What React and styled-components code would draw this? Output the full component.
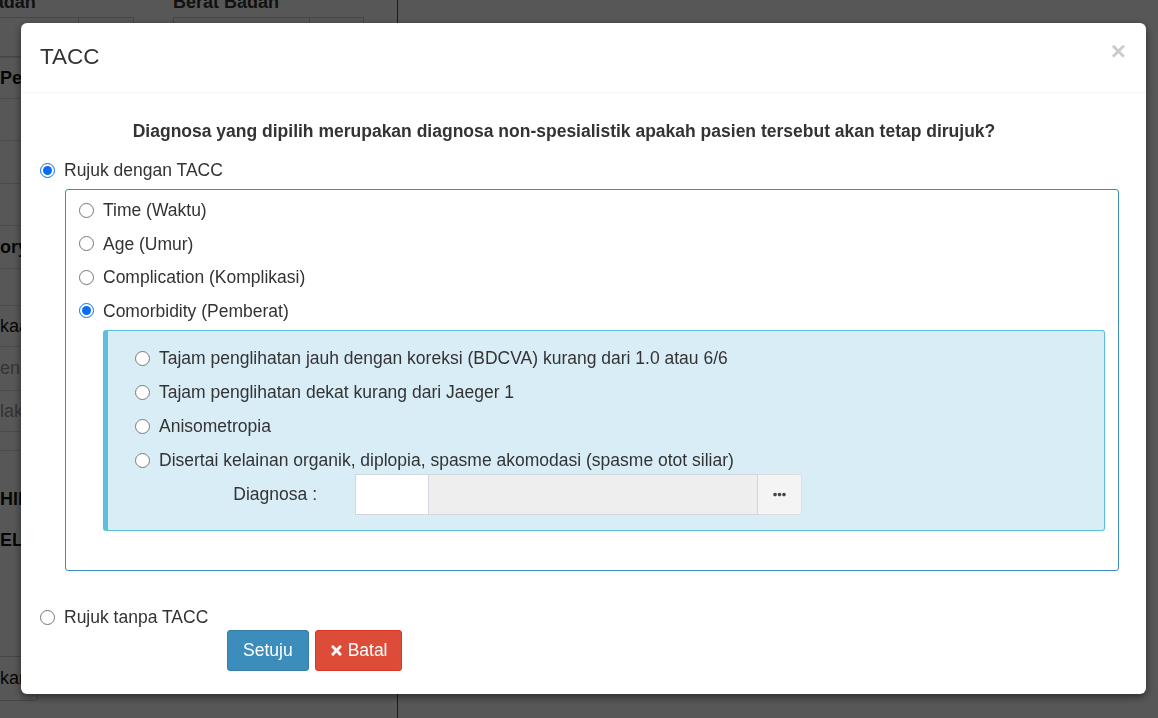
import React, { useState } from 'react'
import styled, { createGlobalStyle } from 'styled-components'
import { FaTimes, FaEllipsisH } from 'react-icons/fa'

const GlobalStyle = createGlobalStyle`
  html, body {
    margin: 0;
    padding: 0;
    height: 100%;
    overflow: hidden;
  }
  body {
    font-family: 'Liberation Sans', Arial, sans-serif;
    color: #333;
    background: #fff;
  }
`

/* ---------- page behind the dialog ---------- */

const Page = styled.div`
  display: flex;
  height: 718px;
  background: #fff;
`

const LeftCol = styled.div`
  width: 397px;
  flex: none;
  border-right: 1px solid #b52a1e;
  display: flex;
  flex-direction: column;
`

const HeadLabels = styled.div`
  display: grid;
  grid-template-columns: 173px 1fr;
  margin-top: -9px;
  height: 26px;
  font-weight: bold;
  font-size: 18px;
  line-height: 22px;

  span:first-child {
    margin-left: -78px;
  }
`

const InputPair = styled.div`
  display: grid;
  grid-template-columns: 134px 39px 191px;
  height: 41px;
  border-bottom: 1px solid #ddd;
  box-sizing: border-box;
`

const FakeInput = styled.div`
  display: grid;
  grid-template-columns: ${p => p.$cols};
  border: 1px solid #ccc;
  border-left: ${p => (p.$cut ? 'none' : '1px solid #ccc')};

  div + div {
    border-left: 1px solid #ccc;
  }
`

const BgRow = styled.div`
  height: ${p => p.$h}px;
  box-sizing: border-box;
  border-bottom: ${p => (p.$line ? '1px solid #ddd' : 'none')};
  display: flex;
  align-items: center;
  font-size: 18px;
  font-weight: ${p => (p.$bold ? 'bold' : 'normal')};
  color: ${p => (p.$muted ? '#999' : '#111')};
  white-space: nowrap;
  padding-left: ${p => p.$indent || 0}px;
`

const BgButton = styled.div`
  width: 38px;
  height: 45px;
  box-sizing: border-box;
  border: 1px solid #ccc;
  border-left: none;
  border-radius: 0 4px 4px 0;
  display: flex;
  align-items: center;
  overflow: hidden;
  font-size: 18px;
  color: #111;
`

/* ---------- modal ---------- */

const Backdrop = styled.div`
  position: fixed;
  inset: 0;
  background: rgba(0, 0, 0, 0.66);
`

const Dialog = styled.div`
  position: fixed;
  top: 23px;
  left: 21px;
  width: 1125px;
  background: #fff;
  border-radius: 6px;
  box-shadow: 0 3px 9px rgba(0, 0, 0, 0.5);
  font-size: 17.5px;
`

const Header = styled.div`
  height: 70px;
  box-sizing: border-box;
  border-bottom: 1px solid #f4f4f4;
  padding: 0 20px 2px 19px;
  display: flex;
  align-items: center;
  justify-content: space-between;
`

const Title = styled.h4`
  margin: 0;
  font-size: 22.5px;
  font-weight: normal;
  line-height: 28px;
  color: #333;
`

const Close = styled.button`
  align-self: flex-start;
  margin-top: 15px;
  padding: 0;
  border: 0;
  background: none;
  font-family: 'Liberation Sans', Arial, sans-serif;
  font-size: 26px;
  font-weight: bold;
  line-height: 1;
  color: #000;
  opacity: 0.2;
  cursor: pointer;
`

const Body = styled.div`
  padding: 26px 27px 23px 19px;
`

const Question = styled.p`
  margin: 0 31px 13px 0;
  text-align: center;
  font-weight: bold;
  line-height: 25px;
`

const RadioRow = styled.label`
  display: flex;
  align-items: center;
  gap: 9px;
  height: 26px;
  line-height: 26px;
  cursor: pointer;
`

const Radio = styled.input.attrs({ type: 'radio' })`
  width: 15px;
  height: 15px;
  margin: 0;
  flex: none;
  accent-color: #0a6cf5;
`

const Fieldset = styled.div`
  margin: 6px 0 0 25px;
  border: 1px solid #3c8dbc;
  border-radius: 3px;
  padding: 7px 13px 39px 13px;
  display: flex;
  flex-direction: column;
`

const OptionList = styled.div`
  display: flex;
  flex-direction: column;
  gap: ${p => p.$gap}px;
`

const Callout = styled.div`
  margin: 6.5px 0 0 24px;
  background: #d9edf7;
  border: 1px solid #5bc0de;
  border-left: 5px solid #5bc0de;
  border-radius: 3px;
  padding: 14px 20px 15px 27px;
`

const DiagnosaRow = styled.div`
  display: grid;
  grid-template-columns: 182px 447px;
  column-gap: 38px;
  align-items: center;
  margin-top: 1px;
`

const DiagnosaLabel = styled.label`
  text-align: right;
`

const InputGroup = styled.div`
  display: flex;
  height: 41px;
`

const CodeInput = styled.input`
  width: 74px;
  box-sizing: border-box;
  border: 1px solid #d2d6de;
  background: #fff;
  outline: none;
  font: inherit;
`

const NameInput = styled.input`
  flex: 1;
  min-width: 0;
  box-sizing: border-box;
  border: 1px solid #d2d6de;
  border-left: none;
  background: #eee;
  outline: none;
  font: inherit;
`

const DotsButton = styled.button`
  width: 44px;
  box-sizing: border-box;
  border: 1px solid #ddd;
  border-left: none;
  border-radius: 0 3px 3px 0;
  background: #f4f4f4;
  color: #444;
  padding: 0;
  display: flex;
  align-items: center;
  justify-content: center;
  cursor: pointer;
`

const Bottom = styled.div`
  margin-top: 33px;
`

const Actions = styled.div`
  display: flex;
  gap: 6px;
  margin-left: 187px;
`

const Button = styled.button`
  height: 41px;
  box-sizing: border-box;
  padding: 0 ${p => (p.$variant === 'danger' ? 13 : 15)}px;
  border-radius: 3px;
  border: 1px solid ${p => (p.$variant === 'danger' ? '#d73925' : '#367fa9')};
  background: ${p => (p.$variant === 'danger' ? '#dd4b39' : '#3c8dbc')};
  color: #fff;
  font-family: 'Liberation Sans', Arial, sans-serif;
  font-size: 17.5px;
  display: flex;
  align-items: center;
  gap: 4px;
  cursor: pointer;
`

const criteria = [
  'Time (Waktu)',
  'Age (Umur)',
  'Complication (Komplikasi)',
  'Comorbidity (Pemberat)'
]

const comorbidities = [
  'Tajam penglihatan jauh dengan koreksi (BDCVA) kurang dari 1.0 atau 6/6',
  'Tajam penglihatan dekat kurang dari Jaeger 1',
  'Anisometropia',
  'Disertai kelainan organik, diplopia, spasme akomodasi (spasme otot siliar)'
]

const Background = () => (
  <Page>
    <LeftCol>
      <HeadLabels>
        <span>Tinggi Badan</span>
        <span>Berat Badan</span>
      </HeadLabels>
      <InputPair>
        <FakeInput $cols='78px 1fr' $cut>
          <div />
          <div />
        </FakeInput>
        <div />
        <FakeInput $cols='135px 1fr'>
          <div />
          <div />
        </FakeInput>
      </InputPair>
      <BgRow $h={41} $line $bold>
        Pernapasan
      </BgRow>
      <BgRow $h={42} $line />
      <BgRow $h={43} $line />
      <BgRow $h={42} $line />
      <BgRow $h={43} $line $bold $indent={-1}>
        orybaru
      </BgRow>
      <BgRow $h={37} $line />
      <BgRow $h={41} $line $indent={-1}>
        kaadaan
      </BgRow>
      <BgRow $h={44} $line $muted $indent={-1}>
        enaga
      </BgRow>
      <BgRow $h={41} $line $muted $indent={-2}>
        lakukan
      </BgRow>
      <BgRow $h={19} $line />
      <BgRow $h={28} />
      <BgRow $h={40} $bold $indent={-3}>
        HINGGA
      </BgRow>
      <BgRow $h={42} $bold $indent={-1}>
        ELAS
      </BgRow>
      <BgRow $h={95} />
      <BgButton>kan</BgButton>
    </LeftCol>
  </Page>
)

const App = () => {
  const [refer, setRefer] = useState('tacc')
  const [criterion, setCriterion] = useState(3)
  const [comorbidity, setComorbidity] = useState(null)

  return (
    <>
      <GlobalStyle />
      <Background />
      <Backdrop />
      <Dialog>
        <Header>
          <Title>TACC</Title>
          <Close>×</Close>
        </Header>
        <Body>
          <Question>
            Diagnosa yang dipilih merupakan diagnosa non-spesialistik apakah
            pasien tersebut akan tetap dirujuk?
          </Question>
          <RadioRow>
            <Radio
              name='refer'
              checked={refer === 'tacc'}
              onChange={() => setRefer('tacc')}
            />
            Rujuk dengan TACC
          </RadioRow>
          <Fieldset>
            <OptionList $gap={7.5}>
              {criteria.map((c, k) => (
                <RadioRow key={`crit-${k}`}>
                  <Radio
                    name='criterion'
                    checked={criterion === k}
                    onChange={() => setCriterion(k)}
                  />
                  {c}
                </RadioRow>
              ))}
            </OptionList>
            <Callout>
              <OptionList $gap={8}>
                {comorbidities.map((c, k) => (
                  <RadioRow key={`como-${k}`}>
                    <Radio
                      name='comorbidity'
                      checked={comorbidity === k}
                      onChange={() => setComorbidity(k)}
                    />
                    {c}
                  </RadioRow>
                ))}
              </OptionList>
              <DiagnosaRow>
                <DiagnosaLabel>Diagnosa :</DiagnosaLabel>
                <InputGroup>
                  <CodeInput />
                  <NameInput readOnly />
                  <DotsButton>
                    <FaEllipsisH size={13} />
                  </DotsButton>
                </InputGroup>
              </DiagnosaRow>
            </Callout>
          </Fieldset>
          <Bottom>
            <RadioRow>
              <Radio
                name='refer'
                checked={refer === 'none'}
                onChange={() => setRefer('none')}
              />
              Rujuk tanpa TACC
            </RadioRow>
            <Actions>
              <Button>Setuju</Button>
              <Button $variant='danger'>
                <FaTimes size={15} />
                Batal
              </Button>
            </Actions>
          </Bottom>
        </Body>
      </Dialog>
    </>
  )
}

export default App
